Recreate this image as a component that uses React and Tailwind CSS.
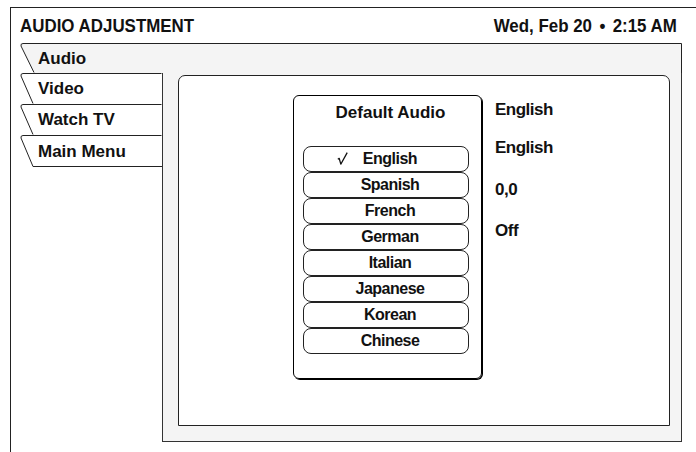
import React from 'react';

const languages = ['English', 'Spanish', 'French', 'German', 'Italian', 'Japanese', 'Korean', 'Chinese'];

// tab outline drawn as svg behind the label
const Tab = ({ label, width, height, slant, fill, bottom, right }) => (
  <div className="relative flex items-center" style={{ width, height }}>
    <svg className="absolute inset-0" width={width} height={height}>
      <polygon points={`0,0 ${width},0 ${width},${height} ${slant},${height}`} fill={fill} />
      <path
        d={`M${slant},${height - 0.5} L1,3 Q0.5,0.5 3,0.5 L${width - 0.5},0.5${right ? ` L${width - 0.5},${height}` : ''}`}
        fill="none"
        stroke="#222"
        strokeWidth="1"
      />
      {bottom && <line x1={slant} y1={height - 0.5} x2={width} y2={height - 0.5} stroke="#222" strokeWidth="1" />}
    </svg>
    <span className="relative pl-[18px] pt-[1px] text-[17px] leading-[20px]">{label}</span>
  </div>
);

const Check = () => (
  <svg className="absolute right-full mr-[15px] top-[3px]" width="11" height="13" viewBox="0 0 11 13">
    <path d="M0.8,7.2 L2.2,6.4 L3.8,12.2 L10.2,0.6" fill="none" stroke="#111" strokeWidth="1.3" strokeLinejoin="round" />
  </svg>
);

export default function App() {
  return (
    <div className="w-[696px] h-[452px] overflow-hidden bg-white text-[#111] font-['Liberation_Sans',Arial,sans-serif] font-bold">
      <div className="ml-[10px] mt-[7px] w-[686px] h-[460px] border-l border-t border-[#222]">
        {/* Header */}
        <div className="flex justify-between h-[35px] pt-[7px] pl-[9px] pr-[19px] text-[19px] leading-[22px]">
          <span className="inline-block origin-left scale-x-[0.89]">AUDIO ADJUSTMENT</span>
          <span className="inline-block origin-right scale-x-[0.89]">
            Wed, Feb 20 <span className="mx-[3px]">•</span> 2:15 AM
          </span>
        </div>

        <div className="ml-[9px] w-[662px]">
          <Tab label="Audio" width={662} height={30} slant={14} fill="#f4f4f4" right />
          <div className="flex">
            <div className="w-[142px] flex flex-col">
              <Tab label="Video" width={142} height={31} slant={13} fill="#fff" />
              <Tab label="Watch TV" width={142} height={31} slant={13} fill="#fff" />
              <Tab label="Main Menu" width={142} height={32} slant={13} fill="#fff" bottom />
            </div>

            <div className="w-[520px] h-[369px] bg-[#f4f4f4] border-l border-r border-b border-[#333] pl-[15px] pr-[11px] pt-[2px] pb-[15px]">
              <div className="h-full bg-white border border-[#222] rounded-tl-[7px] rounded-tr-[7px] flex">
                {/* Default Audio dialog */}
                <div className="ml-[114px] mt-[19px] w-[189px] h-[284px] border border-black rounded-[6px] shadow-[1px_1px_0_#000] flex flex-col">
                  <div className="pt-[7px] text-center pl-[6px] text-[17px] leading-[20px]">Default Audio</div>
                  <div className="mt-[23px] ml-[9px] w-[166px] flex flex-col">
                    {languages.map((lang, i) => (
                      <div
                        key={lang}
                        className="h-[26px] border border-[#222] rounded-[8px] flex items-center justify-center pl-[8px] text-[16px] leading-[20px] tracking-[-0.5px]"
                      >
                        <span className="relative">
                          {i === 0 && <Check />}
                          {lang}
                        </span>
                      </div>
                    ))}
                  </div>
                </div>

                {/* Current values */}
                <div className="ml-[13px] mt-[24px] flex flex-col text-[17px] leading-[20px] tracking-[-0.5px]">
                  <span>English</span>
                  <span className="mt-[18px]">English</span>
                  <span className="mt-[22px]">0,0</span>
                  <span className="mt-[21px]">Off</span>
                </div>
              </div>
            </div>
          </div>
        </div>
      </div>
    </div>
  );
}
